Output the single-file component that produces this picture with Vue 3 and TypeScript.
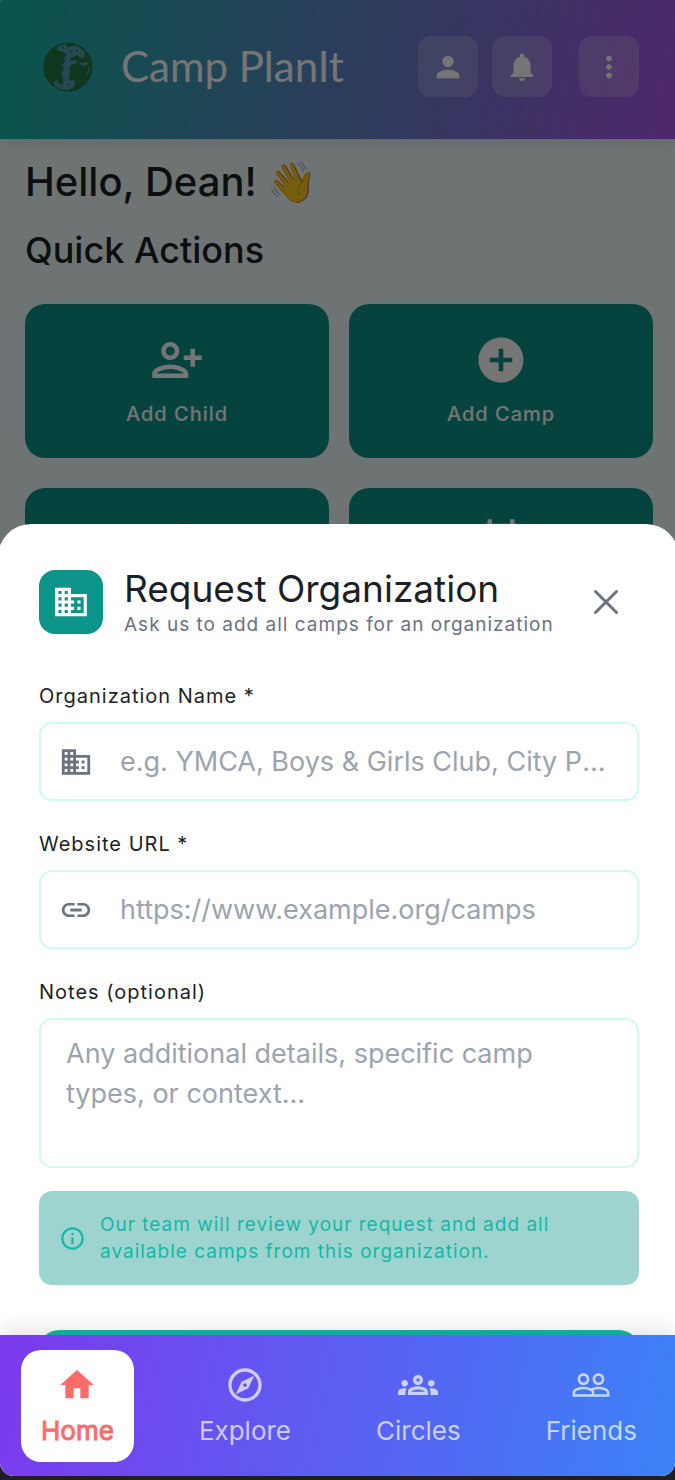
<script setup lang="ts">
import { ref } from 'vue'

interface QuickAction {
  id: string
  label: string
  showLabel: boolean
  icon: string
}

interface NavItem {
  label: string
  icon: string
}

const businessIcon =
  'M12 7V3H2v18h20V7H12zM6 19H4v-2h2v2zm0-4H4v-2h2v2zm0-4H4V9h2v2zm0-4H4V5h2v2zm4 12H8v-2h2v2zm0-4H8v-2h2v2zm0-4H8V9h2v2zm0-4H8V5h2v2zm10 12h-8v-2h2v-2h-2v-2h2v-2h-2V9h8v10zm-2-8h-2v2h2v-2zm0 4h-2v2h2v-2z'
const linkIcon =
  'M3.9 12c0-1.71 1.39-3.1 3.1-3.1h4V7H7c-2.76 0-5 2.24-5 5s2.24 5 5 5h4v-1.9H7c-1.71 0-3.1-1.39-3.1-3.1zM8 13h8v-2H8v2zm9-6h-4v1.9h4c1.71 0 3.1 1.39 3.1 3.1s-1.39 3.1-3.1 3.1h-4V17h4c2.76 0 5-2.24 5-5s-2.24-5-5-5z'

const quickActions: QuickAction[] = [
  {
    id: 'child',
    label: 'Add Child',
    showLabel: true,
    icon: 'M13 8c0-2.21-1.79-4-4-4S5 5.79 5 8s1.79 4 4 4 4-1.79 4-4zm-2 0c0 1.1-.9 2-2 2s-2-.9-2-2 .9-2 2-2 2 .9 2 2zM1 18v2h16v-2c0-2.66-5.33-4-8-4s-8 1.34-8 4zm2 0c.2-.71 3.3-2 6-2 2.69 0 5.77 1.28 6 2H3zm17-3v-3h3v-2h-3V7h-2v3h-3v2h3v3h2z',
  },
  {
    id: 'camp',
    label: 'Add Camp',
    showLabel: true,
    icon: 'M12 2C6.48 2 2 6.48 2 12s4.48 10 10 10 10-4.48 10-10S17.52 2 12 2zm5 11h-4v4h-2v-4H7v-2h4V7h2v4h4v2z',
  },
  {
    id: 'search',
    label: 'Search',
    showLabel: false,
    icon: 'M12 3a9 9 0 1 0 0 18 9 9 0 0 0 0-18zm0 16a7 7 0 1 1 0-14 7 7 0 0 1 0 14z',
  },
  {
    id: 'calendar',
    label: 'Calendar',
    showLabel: false,
    icon: 'M17 12h-5v5h5v-5zM16 1v2H8V1H6v2H5c-1.11 0-1.99.9-1.99 2L3 19c0 1.1.89 2 2 2h14c1.1 0 2-.9 2-2V5c0-1.1-.9-2-2-2h-1V1h-2zm3 18H5V8h14v11z',
  },
]

const navItems: NavItem[] = [
  { label: 'Home', icon: 'M10 20v-6h4v6h5v-8h3L12 3 2 12h3v8z' },
  {
    label: 'Explore',
    icon: 'M12 2C6.48 2 2 6.48 2 12s4.48 10 10 10 10-4.48 10-10S17.52 2 12 2zm0 18c-4.41 0-8-3.59-8-8s3.59-8 8-8 8 3.59 8 8-3.59 8-8 8zm-5.5-2.5l7.51-3.49L17.5 6.5 9.99 9.99 6.5 17.5zm5.5-6.6c.61 0 1.1.49 1.1 1.1s-.49 1.1-1.1 1.1-1.1-.49-1.1-1.1.49-1.1 1.1-1.1z',
  },
  {
    label: 'Circles',
    icon: 'M4 13c1.1 0 2-.9 2-2s-.9-2-2-2-2 .9-2 2 .9 2 2 2zm1.13 1.1c-.37-.06-.74-.1-1.13-.1-.99 0-1.93.21-2.78.58A2.01 2.01 0 0 0 0 16.43V18h4.5v-1.61c0-.83.23-1.61.63-2.29zM20 13c1.1 0 2-.9 2-2s-.9-2-2-2-2 .9-2 2 .9 2 2 2zm4 3.43c0-.81-.48-1.53-1.22-1.85A6.95 6.95 0 0 0 20 14c-.39 0-.76.04-1.13.1.4.68.63 1.46.63 2.29V18H24v-1.57zm-7.76-2.78A9.39 9.39 0 0 0 12 12.75c-1.63 0-3.07.39-4.24.9A2.988 2.988 0 0 0 6 16.39V18h12v-1.61c0-1.18-.68-2.26-1.76-2.74zM8.07 16c.09-.23.13-.39.91-.69.97-.38 1.99-.56 3.02-.56s2.05.18 3.02.56c.77.3.81.46.91.69H8.07zM12 8c.55 0 1 .45 1 1s-.45 1-1 1-1-.45-1-1 .45-1 1-1m0-2c-1.66 0-3 1.34-3 3s1.34 3 3 3 3-1.34 3-3-1.34-3-3-3z',
  },
  {
    label: 'Friends',
    icon: 'M16.5 13c-1.2 0-3.07.34-4.5 1-1.43-.67-3.3-1-4.5-1C5.33 13 1 14.08 1 16.25V19h22v-2.75c0-2.17-4.33-3.25-6.5-3.25zm-4 4.5h-10v-1.25c0-.54 2.56-1.75 5-1.75s5 1.21 5 1.75v1.25zm9 0H14v-1.25c0-.46-.2-.86-.52-1.22.88-.3 1.96-.53 3.02-.53 2.44 0 5 1.21 5 1.75v1.25zM7.5 12c1.93 0 3.5-1.57 3.5-3.5S9.43 5 7.5 5 4 6.57 4 8.5 5.57 12 7.5 12zm0-5.5c1.1 0 2 .9 2 2s-.9 2-2 2-2-.9-2-2 .9-2 2-2zm9 5.5c1.93 0 3.5-1.57 3.5-3.5S18.43 5 16.5 5 13 6.57 13 8.5s1.57 3.5 3.5 3.5zm0-5.5c1.1 0 2 .9 2 2s-.9 2-2 2-2-.9-2-2 .9-2 2-2z',
  },
]

const activeTab = ref('Home')
const organization = ref('')
const website = ref('')
const notes = ref('')
</script>

<template>
  <div class="screen">
    <header class="topbar">
      <svg class="logo" viewBox="0 0 50 50" aria-hidden="true">
        <circle cx="25" cy="25" r="24.5" fill="#207840" />
        <g fill="#51a0b0">
          <path
            d="M18.3 2.7L22.3 2 25 5.3 29.7 4 34.3 3.3 37.7 6.7 41.7 9.3V14.7L37.7 16 34.3 13.3 31.7 14.7 27.7 15.3 27 18 34.3 18.7 33.7 21.3 28.3 22.7 26.3 26 27 31.3 25.7 36.7 27.7 39.3 30.3 37.3 32.3 40.7 30.3 46 25 48 18.3 47.3 11.7 44 11 39.3 13.7 38 16.3 42H20.3L19.7 35.3 18.3 31.3 21 27.3 19 22.7 22.3 19.3 21 16 23.7 13.3 21.7 10 17.7 9.3 14.3 8 13.7 5.3z"
          />
          <path d="M36 20l4 1 4-1 1 2-3 2-5-1z" />
          <path d="M45.5 25l1.5 0-1 5-3 5 0-2 2-3z" />
          <path d="M2 29l2 1-1 2z" />
        </g>
        <g fill="#207840">
          <path d="M18 4l3 2-2 1zM27 8l3 1-2 2zM33 7l2 2-2 1zM18 43l2 1-1 2zM24 42l3 0-2 2z" />
        </g>
      </svg>
      <h1 class="brand">Camp PlanIt</h1>
      <div class="tools">
        <button type="button" class="tool" aria-label="Profile">
          <svg viewBox="0 0 24 24">
            <path d="M12 12c2.21 0 4-1.79 4-4s-1.79-4-4-4-4 1.79-4 4 1.79 4 4 4zm0 2c-2.67 0-8 1.34-8 4v2h16v-2c0-2.66-5.33-4-8-4z" />
          </svg>
        </button>
        <button type="button" class="tool" aria-label="Notifications">
          <svg viewBox="0 0 24 24">
            <path d="M12 22c1.1 0 2-.9 2-2h-4c0 1.1.89 2 2 2zm6-6v-5c0-3.07-1.64-5.64-4.5-6.32V4c0-.83-.67-1.5-1.5-1.5s-1.5.67-1.5 1.5v.68C7.63 5.36 6 7.92 6 11v5l-2 2v1h16v-1l-2-2z" />
          </svg>
        </button>
        <button type="button" class="tool tool-menu" aria-label="More">
          <svg viewBox="0 0 24 24">
            <path d="M12 8c1.1 0 2-.9 2-2s-.9-2-2-2-2 .9-2 2 .9 2 2 2zm0 2c-1.1 0-2 .9-2 2s.9 2 2 2 2-.9 2-2-.9-2-2-2zm0 6c-1.1 0-2 .9-2 2s.9 2 2 2 2-.9 2-2-.9-2-2-2z" />
          </svg>
        </button>
      </div>
    </header>

    <main class="home">
      <h2 class="greeting">Hello, Dean! 👋</h2>
      <h3 class="section-title">Quick Actions</h3>
      <div class="actions">
        <button
          v-for="action in quickActions"
          :key="action.id"
          type="button"
          class="action"
          :aria-label="action.label"
        >
          <svg viewBox="0 0 24 24"><path :d="action.icon" /></svg>
          <span class="action-label"><template v-if="action.showLabel">{{ action.label }}</template></span>
        </button>
      </div>
    </main>

    <div class="scrim"></div>

    <section class="sheet" role="dialog" aria-labelledby="sheet-title">
      <div class="sheet-head">
        <span class="sheet-badge">
          <svg viewBox="0 0 24 24"><path :d="businessIcon" /></svg>
        </span>
        <div class="sheet-heading">
          <h2 id="sheet-title" class="sheet-title">Request Organization</h2>
          <p class="sheet-subtitle">Ask us to add all camps for an organization</p>
        </div>
        <button type="button" class="close" aria-label="Close">
          <svg viewBox="0 0 24 24">
            <path d="M5.7 5.7l12.6 12.6M18.3 5.7L5.7 18.3" />
          </svg>
        </button>
      </div>

      <form class="form" @submit.prevent>
        <div class="group">
          <label for="organization">Organization Name *</label>
          <div class="field">
            <svg viewBox="0 0 24 24"><path :d="businessIcon" /></svg>
            <input
              id="organization"
              v-model="organization"
              type="text"
              placeholder="e.g. YMCA, Boys &amp; Girls Club, City Parks"
            />
          </div>
        </div>
        <div class="group">
          <label for="website">Website URL *</label>
          <div class="field">
            <svg viewBox="0 0 24 24"><path :d="linkIcon" /></svg>
            <input id="website" v-model="website" type="url" placeholder="https://www.example.org/camps" />
          </div>
        </div>
        <div class="group">
          <label for="notes">Notes (optional)</label>
          <textarea
            id="notes"
            v-model="notes"
            placeholder="Any additional details, specific camp types, or context..."
          ></textarea>
        </div>
        <div class="notice">
          <svg viewBox="0 0 24 24">
            <path d="M11 7h2v2h-2zm0 4h2v6h-2zm1-9C6.48 2 2 6.48 2 12s4.48 10 10 10 10-4.48 10-10S17.52 2 12 2zm0 18c-4.41 0-8-3.59-8-8s3.59-8 8-8 8 3.59 8 8-3.59 8-8 8z" />
          </svg>
          <p>Our team will review your request and add all available camps from this organization.</p>
        </div>
        <button type="submit" class="submit" aria-label="Submit Request"></button>
      </form>
    </section>

    <nav class="tabs">
      <button
        v-for="item in navItems"
        :key="item.label"
        type="button"
        class="tab"
        :class="{ active: activeTab === item.label }"
        @click="activeTab = item.label"
      >
        <svg viewBox="0 0 24 24"><path :d="item.icon" /></svg>
        <span>{{ item.label }}</span>
      </button>
    </nav>
  </div>
</template>

<style>
body {
  margin: 0;
  background: #1f1f23;
}
</style>

<style scoped>
.screen {
  position: relative;
  height: calc(100vh - 4px);
  overflow: hidden;
  border-radius: 3px 0 14px 14px;
  background: #f0fdfa;
  font-family: Inter, 'Liberation Sans', sans-serif;
  color: #1c1f24;
}

.screen * {
  box-sizing: border-box;
}

h1,
h2,
h3,
p {
  margin: 0;
}

button {
  border: 0;
  padding: 0;
  font: inherit;
  cursor: pointer;
}

svg {
  display: block;
  flex: none;
  fill: currentColor;
}

.topbar {
  display: flex;
  align-items: center;
  padding: 36px 36px 42px 43px;
  background: linear-gradient(102deg, #14b8a6, #a855e8);
  box-shadow: 0 3px 14px rgba(0, 0, 0, 0.1);
}

.logo {
  width: 50px;
  height: 50px;
}

.brand {
  margin-left: 28px;
  font-family: Lato, Inter, sans-serif;
  font-size: 42px;
  font-weight: 400;
  line-height: 61px;
  color: #fff;
}

.tools {
  display: flex;
  gap: 14px;
  margin-left: auto;
}

.tool {
  display: grid;
  place-items: center;
  width: 60px;
  height: 61px;
  border-radius: 13px;
  background: rgba(255, 255, 255, 0.2);
  color: #fff;
}

.tool-menu {
  margin-left: 13px;
}

.tool svg {
  width: 34px;
  height: 34px;
}

.home {
  padding: 18px 22px 0 25px;
}

.greeting {
  font-size: 40px;
  font-weight: 550;
  line-height: 50px;
}

.section-title {
  margin: 20px 0 31px;
  font-size: 36px;
  font-weight: 500;
  line-height: 46px;
}

.actions {
  display: grid;
  grid-template-columns: 1fr 1fr;
  gap: 30px 20px;
}

.action {
  display: flex;
  flex-direction: column;
  align-items: center;
  gap: 12px;
  padding: 29px;
  border-radius: 20px;
  background: #0d9488;
  color: #fff;
}

.action svg {
  width: 54px;
  height: 54px;
}

.action-label {
  height: 30px;
  font-size: 20px;
  font-weight: 500;
  line-height: 30px;
  letter-spacing: 1px;
}

.scrim {
  position: absolute;
  inset: 0;
  background: rgba(0, 0, 0, 0.54);
}

.sheet {
  position: absolute;
  right: -4px;
  bottom: 0;
  left: -2px;
  padding: 42px 40px 66px 41px;
  border-radius: 33px 33px 0 0;
  background: #fff;
}

.sheet-head {
  display: flex;
  align-items: center;
  margin-bottom: 43px;
}

.sheet-badge {
  display: grid;
  place-items: center;
  width: 64px;
  height: 64px;
  border-radius: 16px;
  background: #0d9488;
  color: #fff;
}

.sheet-badge svg {
  width: 38px;
  height: 38px;
}

.sheet-heading {
  flex: 1;
  margin-left: 21px;
}

.sheet-title {
  font-size: 37px;
  font-weight: 400;
  line-height: 46px;
}

.sheet-subtitle {
  font-size: 19px;
  line-height: 26px;
  letter-spacing: 1px;
  color: #6b7280;
}

.close {
  display: grid;
  place-items: center;
  width: 66px;
  height: 66px;
  background: none;
  color: #6b7280;
}

.close svg {
  width: 40px;
  height: 40px;
  fill: none;
  stroke: currentColor;
  stroke-width: 1.8;
  stroke-linecap: round;
}

.group {
  margin-bottom: 28px;
}

.group label {
  display: block;
  margin-bottom: 11px;
  font-size: 20px;
  font-weight: 400;
  line-height: 30px;
  letter-spacing: 1px;
}

.field {
  display: flex;
  align-items: center;
  gap: 27px;
  height: 79px;
  padding: 0 25px 0 18px;
  border: 2px solid #ccfbf1;
  border-radius: 13px;
  color: #6b7280;
}

.field svg {
  width: 34px;
  height: 34px;
}

input,
textarea {
  border: 0;
  outline: 0;
  background: none;
  font: inherit;
  font-size: 27px;
  line-height: 40px;
  color: #1c1f24;
}

input {
  flex: 1;
  min-width: 0;
  padding: 0;
  text-overflow: ellipsis;
}

input::placeholder,
textarea::placeholder {
  color: #9ca3af;
  opacity: 1;
}

textarea {
  display: block;
  width: 100%;
  height: 150px;
  padding: 14px 25px;
  border: 2px solid #ccfbf1;
  border-radius: 13px;
  resize: none;
}

.notice {
  display: flex;
  align-items: center;
  gap: 14px;
  margin-top: -5px;
  padding: 20px;
  border-radius: 13px;
  background: #9ed4cf;
  color: #14b8a6;
}

.notice svg {
  width: 27px;
  height: 27px;
}

.notice p {
  font-size: 19px;
  line-height: 27px;
  letter-spacing: 1px;
}

.submit {
  display: block;
  width: 100%;
  height: 80px;
  margin-top: 45px;
  border-radius: 20px;
  background: #14b8a6;
}

.tabs {
  position: absolute;
  right: 0;
  bottom: 0;
  left: 0;
  display: flex;
  justify-content: space-between;
  padding: 15px 18px 14px 21px;
  background: linear-gradient(102deg, #7c3aed, #3b82f6);
  box-shadow: 0 -4px 24px rgba(0, 0, 0, 0.12);
}

.tab {
  display: flex;
  flex-direction: column;
  align-items: center;
  gap: 10px;
  padding: 15px 20px;
  border-radius: 20px;
  background: none;
  color: rgba(255, 255, 255, 0.7);
  font-size: 26px;
  line-height: 32px;
}

.tab svg {
  width: 40px;
  height: 40px;
}

.tab.active {
  background: #fff;
  color: #ff6b6b;
  -webkit-text-stroke: 1px #ff6b6b;
}
</style>
